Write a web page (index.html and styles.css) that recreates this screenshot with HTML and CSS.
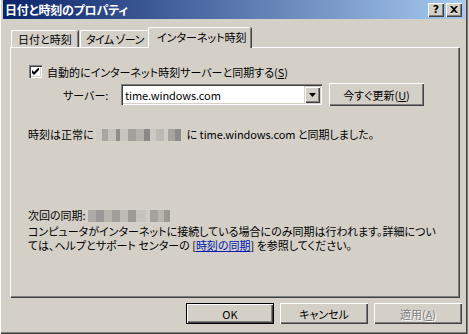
FILE: index.html
```html
<!DOCTYPE html>
<html lang="ja">
<head>
  <meta charset="UTF-8" />
  <title>日付と時刻のプロパティ</title>
  <link rel="stylesheet" href="styles.css">
</head>
<body>

<div class="window">
  <div class="titlebar">
    <span class="title">日付と時刻のプロパティ</span>
    <div class="caption-btns">
      <span class="cap-btn help">?</span>
      <span class="cap-btn close">
        <svg width="8" height="7" viewBox="0 0 8 7"><path d="M0 0h2l2 2 2-2h2L5 3.5 8 7H6L4 5 2 7H0l3-3.5z" fill="#000"/></svg>
      </span>
    </div>
  </div>

  <div class="tabs">
    <div class="tab">日付と時刻</div>
    <div class="tab">タイム ゾーン</div>
    <div class="tab active">インターネット時刻</div>
  </div>

  <div class="panel">
    <div class="row-check">
      <span class="checkbox">
        <svg width="7" height="7" viewBox="0 0 7 7"><path d="M0 2v3l2 2 5-5V-1L2 4z" fill="#000"/></svg>
      </span>
      <span>自動的にインターネット時刻サーバーと同期する(<u>S</u>)</span>
    </div>

    <div class="row-server">
      <span class="server-label">サーバー:</span>
      <div class="combo">
        <span class="combo-text lat">time.windows.com</span>
        <span class="combo-btn">
          <svg width="7" height="4" viewBox="0 0 7 4"><path d="M0 0h7L3.5 4z" fill="#000"/></svg>
        </span>
      </div>
      <button class="btn update">今すぐ更新(<u>U</u>)</button>
    </div>

    <p class="status">時刻は正常に <span class="blur b1"></span> に <span class="lat">time.windows.com</span> と同期しました。</p>

    <p class="next">次回の同期: <span class="blur b2"></span></p>
    <p class="note">コンピュータがインターネットに接続している場合にのみ同期は行われます。詳細につい<br>ては、ヘルプとサポート センターの [<a href="#" class="link">時刻の同期</a>] を参照してください。</p>
  </div>

  <div class="buttons">
    <button class="btn default">OK</button>
    <button class="btn">キャンセル</button>
    <button class="btn disabled">適用(<u>A</u>)</button>
  </div>
</div>

</body>
</html>
```

FILE: styles.css
```css
body { margin: 0; background: #d4d0c8; font-family: "Noto Sans CJK JP", "Noto Sans", sans-serif; font-size: 11px; color: #000; }
.lat { letter-spacing: -0.1px; }
.window { width: 469px; height: 334px; box-sizing: border-box; background: #d4d0c8; padding: 0 3px; border-left: 1px solid #d4d0c8; box-shadow: inset 1px 0 #fff, inset -1px 0 #808080, inset -2px 0 #404040, inset 0 -1px #404040, inset 0 -2px #808080; margin-left: -1px; }
.titlebar { height: 19px; display: flex; align-items: center; justify-content: space-between; background: linear-gradient(90deg, #0a246a, #a6caf0); padding: 0 3px 0 2px; }
.title { color: #fff; font-weight: bold; font-size: 12px; font-feature-settings: "palt"; letter-spacing: -0.2px; }
.caption-btns { display: flex; gap: 2px; }
.cap-btn { width: 16px; height: 14px; box-sizing: border-box; background: #d4d0c8; display: flex; align-items: center; justify-content: center; box-shadow: inset 1px 1px #fff, inset -1px -1px #404040, inset -2px -2px #808080; font: bold 11px "DejaVu Sans", sans-serif; line-height: 14px; }

.tabs { display: flex; align-items: flex-end; height: 20px; margin-top: 8px; padding-left: 8px; position: relative; z-index: 1; }
.tab { height: 17px; box-sizing: border-box; padding: 1px 0 0 6px; white-space: nowrap; overflow: hidden; border-top: 1px solid #fff; border-left: 1px solid #fff; border-radius: 2px 2px 0 0; box-shadow: inset -1px 0 #808080, 1px 0 #404040; font-feature-settings: "palt"; line-height: 15px; }
.tab:first-child { width: 67px; }
.tab:nth-child(2) { width: 70px; margin-left: 2px; padding-left: 5px; letter-spacing: -0.6px; }
.tab.active { width: 103px; height: 21px; margin: 0 -1px -1px -2px; padding: 2px 0 0 8px; background: #d4d0c8; overflow: visible; }

.panel { height: 250px; margin: 0 6px 0 7px; box-sizing: border-box; border-top: 1px solid #fff; border-left: 1px solid #fff; box-shadow: inset -1px -1px #808080, 1px 1px #404040; padding: 17px 0 0 17px; font-feature-settings: "palt"; }
.panel p { margin: 0; white-space: nowrap; }

.row-check { display: flex; align-items: center; gap: 5px; height: 13px; padding-left: 1px; }
.checkbox { width: 13px; height: 13px; box-sizing: border-box; background: #fff; display: flex; align-items: center; justify-content: center; box-shadow: inset 1px 1px #808080, inset 2px 2px #404040, inset -1px -1px #fff, inset -2px -2px #d4d0c8; }

.row-server { display: flex; align-items: center; height: 23px; margin-top: 5px; padding-left: 35px; }
.server-label { width: 58px; }
.combo { width: 201px; height: 21px; box-sizing: border-box; background: #fff; display: flex; align-items: center; justify-content: space-between; padding: 2px; box-shadow: inset 1px 1px #808080, inset 2px 2px #404040, inset -1px -1px #fff, inset -2px -2px #d4d0c8; }
.combo-text { padding-left: 2px; }
.combo-btn { width: 16px; height: 17px; box-sizing: border-box; background: #d4d0c8; display: flex; align-items: center; justify-content: center; box-shadow: inset 1px 1px #d4d0c8, inset 2px 2px #fff, inset -1px -1px #404040, inset -2px -2px #808080; }

.btn { height: 23px; box-sizing: border-box; background: #d4d0c8; border: none; padding: 0; margin: 0; font: inherit; font-feature-settings: "palt"; color: #000; box-shadow: inset 1px 1px #fff, inset -1px -1px #404040, inset -2px -2px #808080; }
.update { width: 95px; margin-left: 7px; }

.status { margin-top: 21px !important; line-height: 14px; height: 14px; }
.next { margin-top: 67px !important; line-height: 14px; height: 14px; }
.note { margin-top: 2px !important; line-height: 14px; }
.link { color: #0018b0; text-decoration: underline; }

.blur { display: inline-block; vertical-align: middle; height: 12px; margin-top: -2px; }
.b1 { width: 85px; margin-right: 3px; background: linear-gradient(90deg, #cfcbc4 0 6px, #a9a6a1 6px 12px, #c5c2bb 12px 20px, #8f8d8a 20px 24px, #c9c5be 24px 32px, #a3a09b 32px 40px, #b4b1ab 40px 48px, #8a8885 48px 54px, #cdc9c2 54px 60px, #bcb9b3 60px 68px, #d0ccc5 68px 72px, #a7a49f 72px 79px, #8e8c89 79px 85px); }
.b2 { width: 82px; background: linear-gradient(90deg, #aeaba6 0 8px, #9a9894 8px 16px, #b7b4ae 16px 24px, #a19e99 24px 32px, #bebbb5 32px 40px, #9e9b97 40px 48px, #c6c3bc 48px 58px, #d0ccc5 58px 62px, #a4a19c 62px 70px, #b9b6b0 70px 76px, #9c9995 76px 82px); }

.buttons { display: flex; justify-content: flex-end; gap: 6px; margin-top: 6px; padding-right: 3px; }
.buttons .btn { width: 88px; height: 21px; }
.btn.default { box-shadow: inset 0 0 0 1px #000, inset 2px 2px #fff, inset -2px -2px #404040, inset -3px -3px #808080; }
.btn.disabled { color: #808080; text-shadow: 1px 1px #fff; }
```
